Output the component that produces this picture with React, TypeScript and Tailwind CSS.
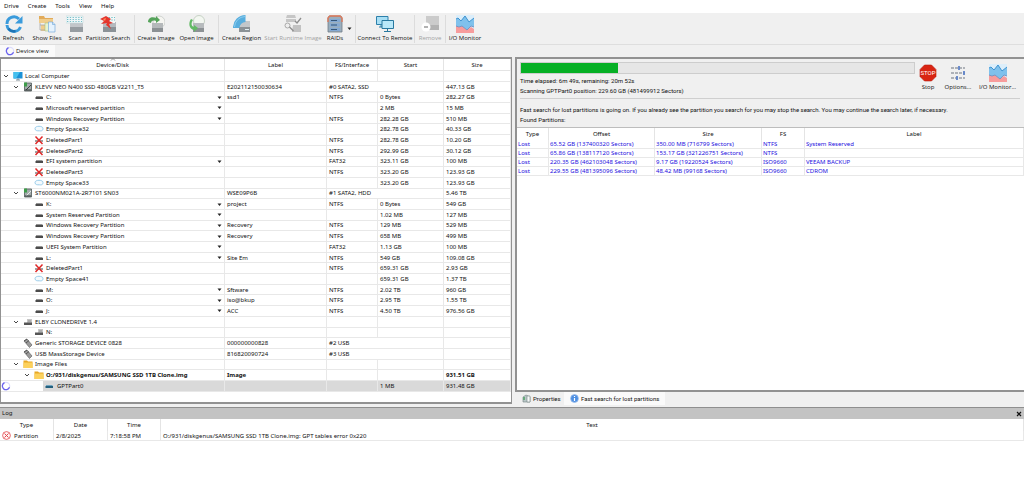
import React from 'react';
import clsx from 'clsx';

type IconName = 'computer' | 'ssd' | 'hdd' | 'part' | 'space' | 'deleted' | 'drive' | 'usb' | 'folder' | 'active';

interface DeviceRow {
  icon: IconName;
  name: string;
  depth: number;
  open?: boolean;
  menu?: boolean;
  label?: string;
  fs?: string;
  start?: string;
  size?: string;
  device?: boolean;
  bold?: boolean;
  selected?: boolean;
}

const devices: DeviceRow[] = [
  { icon: 'computer', name: 'Local Computer', depth: 0, open: true },
  { icon: 'ssd', name: 'KLEVV NEO N400 SSD 480GB V2211_T5', depth: 1, open: true, label: 'E202112150030634', fs: '#0 SATA2, SSD', size: '447.13 GB', device: true },
  { icon: 'part', name: 'C:', depth: 2, menu: true, label: 'ssd1', fs: 'NTFS', start: '0 Bytes', size: '282.27 GB' },
  { icon: 'part', name: 'Microsoft reserved partition', depth: 2, menu: true, start: '2 MB', size: '15 MB' },
  { icon: 'part', name: 'Windows Recovery Partition', depth: 2, menu: true, fs: 'NTFS', start: '282.28 GB', size: '510 MB' },
  { icon: 'space', name: 'Empty Space32', depth: 2, start: '282.78 GB', size: '40.33 GB' },
  { icon: 'deleted', name: 'DeletedPart1', depth: 2, fs: 'NTFS', start: '282.78 GB', size: '10.20 GB' },
  { icon: 'deleted', name: 'DeletedPart2', depth: 2, fs: 'NTFS', start: '292.99 GB', size: '30.12 GB' },
  { icon: 'part', name: 'EFI system partition', depth: 2, menu: true, fs: 'FAT32', start: '323.11 GB', size: '100 MB' },
  { icon: 'deleted', name: 'DeletedPart3', depth: 2, fs: 'NTFS', start: '323.20 GB', size: '123.93 GB' },
  { icon: 'space', name: 'Empty Space33', depth: 2, start: '323.20 GB', size: '123.93 GB' },
  { icon: 'hdd', name: 'ST6000NM021A-2R7101 SN03', depth: 1, open: true, label: 'WSE09P6B', fs: '#1 SATA2, HDD', size: '5.46 TB', device: true },
  { icon: 'part', name: 'K:', depth: 2, menu: true, label: 'project', fs: 'NTFS', start: '0 Bytes', size: '549 GB' },
  { icon: 'part', name: 'System Reserved Partition', depth: 2, menu: true, start: '1.02 MB', size: '127 MB' },
  { icon: 'part', name: 'Windows Recovery Partition', depth: 2, menu: true, label: 'Recovery', fs: 'NTFS', start: '129 MB', size: '529 MB' },
  { icon: 'part', name: 'Windows Recovery Partition', depth: 2, menu: true, label: 'Recovery', fs: 'NTFS', start: '658 MB', size: '499 MB' },
  { icon: 'part', name: 'UEFI System Partition', depth: 2, menu: true, fs: 'FAT32', start: '1.13 GB', size: '100 MB' },
  { icon: 'part', name: 'L:', depth: 2, menu: true, label: 'Site Em', fs: 'NTFS', start: '549 GB', size: '109.08 GB' },
  { icon: 'deleted', name: 'DeletedPart1', depth: 2, fs: 'NTFS', start: '659.31 GB', size: '2.93 GB' },
  { icon: 'space', name: 'Empty Space41', depth: 2, start: '659.31 GB', size: '1.37 TB' },
  { icon: 'part', name: 'M:', depth: 2, menu: true, label: 'Sftware', fs: 'NTFS', start: '2.02 TB', size: '960 GB' },
  { icon: 'part', name: 'O:', depth: 2, menu: true, label: 'iso@bkup', fs: 'NTFS', start: '2.95 TB', size: '1.55 TB' },
  { icon: 'part', name: 'J:', depth: 2, menu: true, label: 'ACC', fs: 'NTFS', start: '4.50 TB', size: '976.56 GB' },
  { icon: 'drive', name: 'ELBY CLONEDRIVE 1.4', depth: 1, open: true },
  { icon: 'drive', name: 'N:', depth: 2 },
  { icon: 'usb', name: 'Generic STORAGE DEVICE 0828', depth: 1, label: '000000000828', fs: '#2 USB', device: true },
  { icon: 'usb', name: 'USB MassStorage Device', depth: 1, label: '816820090724', fs: '#3 USB', device: true },
  { icon: 'folder', name: 'Image Files', depth: 1, open: true },
  { icon: 'folder', name: 'O:/931/diskgenus/SAMSUNG SSD 1TB Clone.img', depth: 2, open: true, label: 'Image', size: '931.51 GB', bold: true },
  { icon: 'active', name: 'GPTPart0', depth: 3, start: '1 MB', size: '931.48 GB', selected: true },
];

const found = [
  ['65.52 GB (137400320 Sectors)', '350.00 MB (716799 Sectors)', 'NTFS', 'System Reserved'],
  ['65.86 GB (138117120 Sectors)', '153.17 GB (321226751 Sectors)', 'NTFS', ''],
  ['220.35 GB (462103048 Sectors)', '9.17 GB (19220524 Sectors)', 'ISO9660', 'VEEAM BACKUP'],
  ['229.55 GB (481395096 Sectors)', '48.42 MB (99168 Sectors)', 'ISO9660', 'CDROM'],
];

// seconds
const elapsed = 6 * 60 + 49;
const remaining = 20 * 60 + 52;

const indent = ['pl-[2px]', 'pl-[12px]', 'pl-[23px]', 'pl-[34px]'];

const RefreshIcon = () => (
  <Svg>
    <path d="M15.500 12A7 7 0 0 1 2 10M2 9a7 7 0 0 1 12-5" fill="none" stroke="#3a9bdc" strokeWidth="3" />
    <path d="M17.500 1v7.500h-7.500z" fill="#3a9bdc" />
    <path d="M3.500 13.500a7 7 0 0 0 7 2.500" fill="none" stroke="#1f74b5" strokeWidth="2.600" />
  </Svg>
);

const Svg: React.FC<{ children: React.ReactNode }> = ({ children }) => (
  <svg viewBox="0 0 18 18" className="w-[18px] h-[18px]" aria-hidden="true">{children}</svg>
);

const ShowFilesIcon = () => (
  <Svg>
    <path d="M1 1h5l1 2h8v4H1z" fill="#e2ab5a" />
    <path d="M1 4h14v4H1zM3 10h7v6H3z" fill="#f0cd8c" />
    <path d="M2 8v7h6M2 10h5" fill="none" stroke="#a6a6a6" strokeWidth=".8" />
    <path d="M7 8h5v8H7z" fill="#e7f3cf" stroke="#9dbb75" strokeWidth=".5" />
    <path d="M10.500 7h4L17 9.500V17h-6.500z" fill="#e5f2fd" stroke="#79aedb" strokeWidth=".7" />
    <path d="M14.500 7v2.500H17" fill="none" stroke="#79aedb" strokeWidth=".7" />
  </Svg>
);

const ScanIcon = () => (
  <Svg>
    <path d="M4 6h13v11H4z" fill="#c2c6ca" />
    <path d="M4 12h13v5H4z" fill="#969ca1" />
    <path d="M0 1h17v7H0z" fill="#f0f7f8" />
    <path d="M1 2.500h15M1 4.500h15M1 6.500h15" stroke="#69b8c4" strokeWidth=".9" strokeDasharray="1.300 1.500" />
    <path d="M0 1h17v7H0z" fill="none" stroke="#b9d5da" strokeWidth=".5" />
  </Svg>
);

const SearchIcon = () => (
  <Svg>
    <path d="M4 7h13v10H4z" fill="#b5babf" />
    <path d="M4 12h13v5H4z" fill="#8b9297" />
    <path d="M6 1h10v7H6z" fill="#f4f8f8" />
    <path d="M7 2.500h9M7 5h9" stroke="#62b9c0" strokeDasharray="1.200 1.500" />
    <path d="M1 4l6-3 5 3-2 2 4 2-4 1 2 5-5-4 1-2-6 1 3-3z" fill="#e4362d" />
    <path d="M4 4l3-1-1 3z" fill="#ff8a5c" />
  </Svg>
);

const CreateImageIcon = () => (
  <Svg>
    <circle cx="12" cy="7" r="6" fill="#f5f5f1" stroke="#c6cac7" strokeWidth=".8" />
    <path d="M5 8h11v9H5z" fill="#b4b8ba" />
    <path d="M5 13h11v4H5z" fill="#8b9093" />
    <path d="M1 7c0-4 4-6 8-4V1l4 4-4 3V6C6 5 4 6 4 8z" fill="#55a35a" />
  </Svg>
);

const OpenImageIcon = () => (
  <Svg>
    <circle cx="11" cy="6" r="5.500" fill="#f3f7f1" stroke="#bcc9ba" strokeWidth=".8" />
    <path d="M5 8h11v9H5z" fill="#b7bbbd" />
    <path d="M5 13h11v4H5z" fill="#8d9295" />
    <path d="M3 4c-3 4-2 10 3 11v2l4-4-4-3v2C3 11 3 8 5 5z" fill="#63ba65" />
  </Svg>
);

const RegionIcon = () => (
  <Svg>
    <path d="M6 6h11v11H6z" fill="#c3c7ca" />
    <path d="M6 12h11v5H6z" fill="#8b9296" />
    <path d="M0 13A12.500 12.500 0 0 1 12.500 0v7A6 6 0 0 0 6.500 13z" fill="#58aede" />
    <path d="M1.500 12A11 11 0 0 1 12 1.500" fill="none" stroke="#8accee" />
    <path d="M12 14h4v1h-4z" fill="#e2eef2" />
  </Svg>
);

const RuntimeIcon = () => (
  <Svg>
    <path d="M3 0h8l1 3H2zM2 4h10v3H2z" fill="#c6c6c6" />
    <circle cx="3.500" cy="10.500" r="2.500" fill="#eee" stroke="#a9a9a9" />
    <path d="M9 10h8v7H8z" fill="#c2c2c2" />
    <path d="M5.500 12l4 4M11 6l2 2 4-5" fill="none" stroke="#8d8d8d" strokeWidth="1.300" />
  </Svg>
);

const RaidIcon = () => (
  <Svg>
    <path d="M3 1h12l1 2v14H2V3z" fill="#9aaebe" stroke="#6e7b85" strokeWidth=".8" />
    <path d="M2 7V3l2-2h10l2 2v4" fill="none" stroke="#e07a5a" strokeWidth="1.400" />
    <path d="M4 4h10v3H4zM4 8.500h10v3H4zM4 13h10v3H4z" fill="#83a9d4" />
    <path d="M5 5.500h6M5 10h6M5 14.500h6" stroke="#355779" />
  </Svg>
);

const RemoteIcon = () => (
  <Svg>
    <path d="M.5 1.500H12v8H.5z" fill="#a8dff5" stroke="#2c80ab" />
    <path d="M3 12h4M5 9v3" stroke="#2c80ab" />
    <path d="M6 5.500h11.500v8H6z" fill="#b9e8f9" stroke="#28789f" />
    <path d="M11.500 13v3M8 16.500h7" stroke="#28789f" />
  </Svg>
);

const RemoveIcon = () => (
  <Svg>
    <path d="M5 1h13v14H5z" fill="#cbcbcb" />
    <path d="M5 10h13v5H5z" fill="#b2b2b2" />
    <circle cx="5" cy="12" r="4.500" fill="#fff" />
    <path d="M3 12h4" stroke="#989898" strokeWidth="1.500" />
  </Svg>
);

const MonitorIcon = () => (
  <Svg>
    <path d="M0 0h18v18H0z" fill="#dceefa" />
    <path d="M0 11l3 1 3-1 5 4 4-3 3 2v4H0z" fill="#f79c9c" />
    <path d="M0 4l2-1 3 3 4-5 4 6 5-4v9l-3-1-4 4-5-4-3 1-3-1z" fill="#7fc1ec" />
    <path d="M0 4l2-1 3 3 4-5 4 6 5-4" fill="none" stroke="#3f93d0" />
    <path d="M0 11l3 1 3-1 5 4 4-4 3 1" fill="none" stroke="#6d88b8" strokeWidth=".8" />
  </Svg>
);

const OptionsIcon = () => (
  <Svg>
    <path d="M2 4h14M2 9h14M2 14h14" stroke="#6c7580" strokeDasharray="3 1" />
    <path d="M10 2v4M15 7v4M8 12v4" stroke="#5f83c9" strokeWidth="1.800" />
  </Svg>
);

const StopIcon = () => (
  <Svg>
    <path d="M5.500 1h7L17 5.500v7L12.500 17h-7L1 12.500v-7z" fill="#d92513" stroke="#b81b0d" strokeWidth=".6" />
    <text x="9" y="11" textAnchor="middle" fontSize="6" fill="#fff" fontFamily="Roboto, sans-serif">STOP</text>
  </Svg>
);

const Spinner = () => (
  <svg viewBox="0 0 10 10" className="w-[10px] h-[10px] shrink-0" aria-hidden="true">
    <circle cx="5" cy="5" r="3.700" fill="none" stroke="#dddcfb" strokeWidth="1.200" />
    <path d="M3.500 1.600A3.700 3.700 0 1 0 8.500 6.300" fill="none" stroke="#6a62ee" strokeWidth="1.300" />
  </svg>
);

const RowIcon: React.FC<{ name: IconName }> = ({ name }) => (
  <svg viewBox="0 0 10 10" className="w-[10px] h-[10px] shrink-0" aria-hidden="true">
    {name === 'computer' && (
      <>
        <path d="M.5 1h9v6.500h-9z" fill="#1b91d6" />
        <path d="M.5 1H7L3 7.500H.5z" fill="#45c0ee" />
        <path d="M3 9h4M5 7.500V9" stroke="#5b6f7c" strokeWidth=".8" />
      </>
    )}
    {(name === 'ssd' || name === 'hdd') && (
      <>
        <path d="M1.500 1h7v8h-7z" fill="#a4abab" stroke="#4e5858" strokeWidth=".8" />
        <path d="M1 .5h3v4H1z" fill="#3d9c49" />
        <path d="M3 8l5-5" stroke={name === 'ssd' ? '#39403f' : '#e5e9e7'} />
        <path d="M2 8h6" stroke="#353b3b" />
      </>
    )}
    {name === 'part' && <><path d="M2 4h6.500v1H2z" fill="#959595" /><path d="M1.500 5H9v2H1.500z" fill="#4b4b4b" /></>}
    {name === 'active' && <><path d="M2 4h6.500v1H2z" fill="#6ea4c0" /><path d="M1.500 5H9v2H1.500z" fill="#24617f" /></>}
    {name === 'space' && <path d="M1 4.500c0-3 8-3 8 0S6.500 6.800 5 6.800 1 7 1 4.500z" fill="#f4fafd" stroke="#8fc6e8" strokeWidth=".9" />}
    {name === 'deleted' && (
      <>
        <path d="M1 5h8v2H1z" fill="#a1a1a1" />
        <path d="M1.500 1.500l7 7.500M8.500 1.500l-7 7.500" stroke="#e02828" strokeWidth="1.500" />
      </>
    )}
    {name === 'drive' && (
      <>
        <path d="M4 2h5v4H4z" fill="#c5c5c5" />
        <path d="M1 5.500h8V8H1z" fill="#555" />
        <path d="M5 4h3" stroke="#888" strokeWidth=".8" />
      </>
    )}
    {name === 'usb' && (
      <>
        <path d="M1 3l3-2 5 6-2.500 2.500z" fill="#9b9b9b" stroke="#555" strokeWidth=".6" />
        <path d="M1 3l3-2M3 5l3-2.500" stroke="#444" strokeWidth=".8" />
      </>
    )}
    {name === 'folder' && (
      <>
        <path d="M.5 1.500H4l1 1h4.500V9h-9z" fill="#e8a824" />
        <path d="M.5 3.500h9V9h-9z" fill="#fcd15c" />
      </>
    )}
  </svg>
);

const Chevron = () => (
  <svg viewBox="0 0 6 6" className="w-[6px] h-[6px]" aria-hidden="true">
    <path d="M1 2l2 2 2-2" fill="none" stroke="#333" strokeWidth=".9" />
  </svg>
);

const Caret = () => (
  <svg viewBox="0 0 5 5" className="w-[5px] h-[5px]" aria-hidden="true">
    <path d="M.5 1.500h4L2.500 4z" fill="#222" />
  </svg>
);

interface ToolProps {
  icon: React.ReactNode;
  text: string;
  width: string;
  disabled?: boolean;
}

const Tool: React.FC<ToolProps> = ({ icon, text, width, disabled }) => (
  <button
    disabled={disabled}
    className={clsx('flex flex-col items-center shrink-0 gap-px whitespace-nowrap', width, disabled ? 'text-[#a2a2a2]' : 'text-[#111]')}
  >
    {icon}
    <span className="leading-[8px]">{text}</span>
  </button>
);

const Separator = () => <span className="w-px h-[28px] mx-px shrink-0 bg-[#dcdcdc]"></span>;

const th = 'h-[12px] p-0 font-normal text-center border-r border-[#e4e4e4]';
const td = 'p-0 pl-[2px] border-r border-b border-[#e8e8e8] whitespace-nowrap';

const DeviceTable = () => (
  <table className="w-full h-[333px] table-fixed border-separate border-spacing-0 leading-[8px]">
    <colgroup>
      <col />
      <col className="w-[102px]" />
      <col className="w-[51px]" />
      <col className="w-[66px]" />
      <col className="w-[67px]" />
    </colgroup>
    <thead>
      <tr className="h-[12px]">
        {['Device/Disk', 'Label', 'FS/Interface', 'Start', 'Size'].map((h) => (
          <th key={h} className={clsx(th, 'relative border-b')}>
            {h}
            {h === 'Device/Disk' && (
              <svg viewBox="0 0 6 3" className="absolute -top-px left-1/2 w-[6px] h-[3px] -ml-[3px]" aria-hidden="true">
                <path d="M1 2.500l2-2 2 2" fill="none" stroke="#777" strokeWidth=".8" />
              </svg>
            )}
          </th>
        ))}
      </tr>
    </thead>
    <tbody>
      {devices.map((row, idx) => (
        <tr key={idx} className={clsx(row.bold && 'font-bold')}>
          <td className="p-0 border-r border-b border-[#e8e8e8] whitespace-nowrap">
            <div className={clsx('flex items-center h-[9px]', row.selected ? 'pl-0' : indent[row.depth])}>
              {row.selected ? (
                <>
                  <span className="w-[42px] shrink-0"><Spinner /></span>
                  <span className="flex flex-1 items-center h-[10px] pl-px gap-[3px] bg-[#d9d9d9]">
                    <RowIcon name={row.icon} />
                    {row.name}
                  </span>
                </>
              ) : (
                <>
                  <span className="w-[10px] shrink-0">
                    {row.open && <button aria-label={`Collapse ${row.name}`} className="block"><Chevron /></button>}
                  </span>
                  <RowIcon name={row.icon} />
                  <span className="flex-1 pl-[2px]">{row.name}</span>
                  {row.menu && <button aria-label={`${row.name} menu`} className="mr-[2px]"><Caret /></button>}
                </>
              )}
            </div>
          </td>
          <td className={clsx(td, row.selected && 'bg-[#d9d9d9]')}>{row.label}</td>
          <td colSpan={row.device ? 2 : 1} className={clsx(td, row.selected && 'bg-[#d9d9d9]')}>{row.fs}</td>
          {!row.device && <td className={clsx(td, row.selected && 'bg-[#d9d9d9]')}>{row.start}</td>}
          <td className={clsx(td, row.selected && 'bg-[#d9d9d9]')}>{row.size}</td>
        </tr>
      ))}
    </tbody>
  </table>
);

const FoundTable = () => (
  <table className="w-full table-fixed border-separate border-spacing-0 leading-[8px]">
    <colgroup>
      <col className="w-[32px]" />
      <col className="w-[106px]" />
      <col className="w-[107px]" />
      <col className="w-[43px]" />
      <col />
    </colgroup>
    <thead>
      <tr>
        {['Type', 'Offset', 'Size', 'FS', 'Label'].map((h) => <th key={h} className={th}>{h}</th>)}
      </tr>
    </thead>
    <tbody className="text-[#1d10e0]">
      {found.map((row, idx) => (
        <tr key={idx}>
          {['Lost', ...row].map((cell, i) => (
            <td key={i} className="h-[9px] p-0 pl-px border-r border-b border-[#e8e8e8] whitespace-nowrap">{cell}</td>
          ))}
        </tr>
      ))}
    </tbody>
  </table>
);

const SearchPanel = () => (
  <section className="flex flex-col flex-1 min-w-0">
    <div className="flex flex-col flex-1 border-y-2 border-l-2 border-[#929292]">
      <div className="pl-[3px] font-[Roboto,sans-serif]">
        <div className="flex justify-between pt-[3px] pb-[2px] mr-[4px] border-b border-[#cfcfcf]">
          <div className="flex-1">
            <div className="h-[12px] border border-[#cdcdcd] bg-[#e6e6e6]">
              <div className="h-full bg-[#06b025]" style={{ width: `${(100 * elapsed) / (elapsed + remaining)}%` }}></div>
            </div>
            <p className="mt-[2px] leading-[10px]">Time elapsed: 6m 49s, remaining: 20m 52s</p>
            <p className="leading-[10px]">Scanning GPTPart0 position: 229.60 GB (481499912 Sectors)</p>
          </div>
          <div className="flex items-start pt-[2px] font-['Open_Sans','Noto_Sans',sans-serif]">
            <Tool icon={<StopIcon />} text="Stop" width="w-[26px]" />
            <Tool icon={<OptionsIcon />} text="Options..." width="w-[34px]" />
            <Tool icon={<MonitorIcon />} text="I/O Monitor..." width="w-[45px]" />
          </div>
        </div>
        <p className="mt-[6px] leading-[10px] whitespace-nowrap">
          Fast search for lost partitions is going on. If you already see the partition you search for you may stop the search. You may continue the search later, if necessary.
        </p>
        <p className="leading-[10px]">Found Partitions:</p>
      </div>
      <div className="flex-1 mt-[2px] bg-white border-t border-[#bdbdbd]">
        <FoundTable />
      </div>
    </div>
    <div className="flex h-[13px] pl-[7px] font-[Roboto,sans-serif]">
      <button className="flex items-center gap-[2px] w-[42px]">
        <svg viewBox="0 0 9 9" className="w-[9px] h-[9px]" aria-hidden="true">
          <path d="M1 3l3-2 4 2v5H1z" fill="#b9c7c7" stroke="#738383" strokeWidth=".6" />
          <path d="M5 2h3v6H5z" fill="#f8fafa" stroke="#738383" strokeWidth=".6" />
          <path d="M1 3h2v3H1z" fill="#68a97c" />
        </svg>
        Properties
      </button>
      <button className="flex items-center gap-[2px] px-[6px] bg-[#fafafa]">
        <svg viewBox="0 0 9 9" className="w-[9px] h-[9px]" aria-hidden="true">
          <circle cx="4.500" cy="4.500" r="3.900" fill="#4d8fe2" stroke="#9fbfea" strokeWidth=".7" />
          <path d="M4.500 4v3M4.500 2v1" stroke="#fff" strokeWidth="1.200" />
        </svg>
        Fast search for lost partitions
      </button>
    </div>
  </section>
);

const LogPanel = () => (
  <section className="min-h-[87px] bg-white border-t border-[#8f8f8f]">
    <div className="flex items-center justify-between h-[11px] px-[2px] bg-[#c3c3c3]">
      <h2>Log</h2>
      <button aria-label="Close log">
        <svg viewBox="0 0 6 6" className="w-[6px] h-[6px]" aria-hidden="true">
          <path d="M1 1l4 4M5 1L1 5" stroke="#111" strokeWidth="1.200" />
        </svg>
      </button>
    </div>
    <table className="w-full table-fixed border-separate border-spacing-0 leading-[8px]">
      <colgroup>
        <col className="w-[54px]" />
        <col className="w-[54px]" />
        <col className="w-[53px]" />
        <col />
      </colgroup>
      <thead>
        <tr>
          {['Type', 'Date', 'Time', 'Text'].map((h) => <th key={h} className={th}>{h}</th>)}
        </tr>
      </thead>
      <tbody>
        <tr>
          <td className={td}>
            <div className="flex items-center gap-[3px]">
              <svg viewBox="0 0 9 9" className="w-[9px] h-[9px]" aria-hidden="true">
                <circle cx="4.500" cy="4.500" r="3.900" fill="#fff4f4" stroke="#e2484d" strokeWidth=".8" />
                <path d="M2.500 2.500l4 4M6.500 2.500l-4 4" stroke="#e2484d" />
              </svg>
              Partition
            </div>
          </td>
          <td className={td}>2/8/2025</td>
          <td className={td}>7:18:58 PM</td>
          <td className={td}>O:/931/diskgenus/SAMSUNG SSD 1TB Clone.img: GPT tables error 0x220</td>
        </tr>
      </tbody>
    </table>
  </section>
);

export default function App() {
  return (
    <div className="flex flex-col min-h-screen bg-[#f0f0f0] text-[#111] text-[6px] font-['Noto_Sans',sans-serif]">
      <nav className="flex items-center gap-[9px] h-[13px] px-[4px] bg-white">
        {['Drive', 'Create', 'Tools', 'View', 'Help'].map((item) => <button key={item}>{item}</button>)}
      </nav>

      <div className="flex items-center h-[32px] border-b border-[#dedede] font-['Open_Sans','Noto_Sans',sans-serif]">
        <Tool icon={<RefreshIcon />} text="Refresh" width="w-[27px]" />
        <Tool icon={<ShowFilesIcon />} text="Show Files" width="w-[40px]" />
        <Tool icon={<ScanIcon />} text="Scan" width="w-[16px]" />
        <Tool icon={<SearchIcon />} text="Partition Search" width="w-[50px]" />
        <Separator />
        <Tool icon={<CreateImageIcon />} text="Create Image" width="w-[40px]" />
        <Tool icon={<OpenImageIcon />} text="Open Image" width="w-[41px]" />
        <Separator />
        <Tool icon={<RegionIcon />} text="Create Region" width="w-[43px]" />
        <Tool icon={<RuntimeIcon />} text="Start Runtime Image" width="w-[60px]" disabled />
        <Tool icon={<RaidIcon />} text="RAIDs" width="w-[24px]" />
        <button aria-label="RAIDs menu" className="w-[7px]"><Caret /></button>
        <Separator />
        <Tool icon={<RemoteIcon />} text="Connect To Remote" width="w-[56px]" />
        <Separator />
        <Tool icon={<RemoveIcon />} text="Remove" width="w-[28px]" disabled />
        <Separator />
        <Tool icon={<MonitorIcon />} text="I/O Monitor" width="w-[36px]" />
      </div>

      <div className="flex h-[12px] font-['Open_Sans','Noto_Sans',sans-serif]">
        <button className="flex items-center gap-px pl-[5px] pr-[6px] bg-[#fafafa]">
          <Spinner />
          Device view
        </button>
      </div>

      <main className="flex flex-1 gap-[4px] pb-[2px]">
        <section className="w-1/2 h-fit min-h-[347px] -mr-px shrink-0 bg-white border-y-2 border-r border-l border-[#929292]">
          <DeviceTable />
        </section>
        <SearchPanel />
      </main>

      <LogPanel />
    </div>
  );
}
